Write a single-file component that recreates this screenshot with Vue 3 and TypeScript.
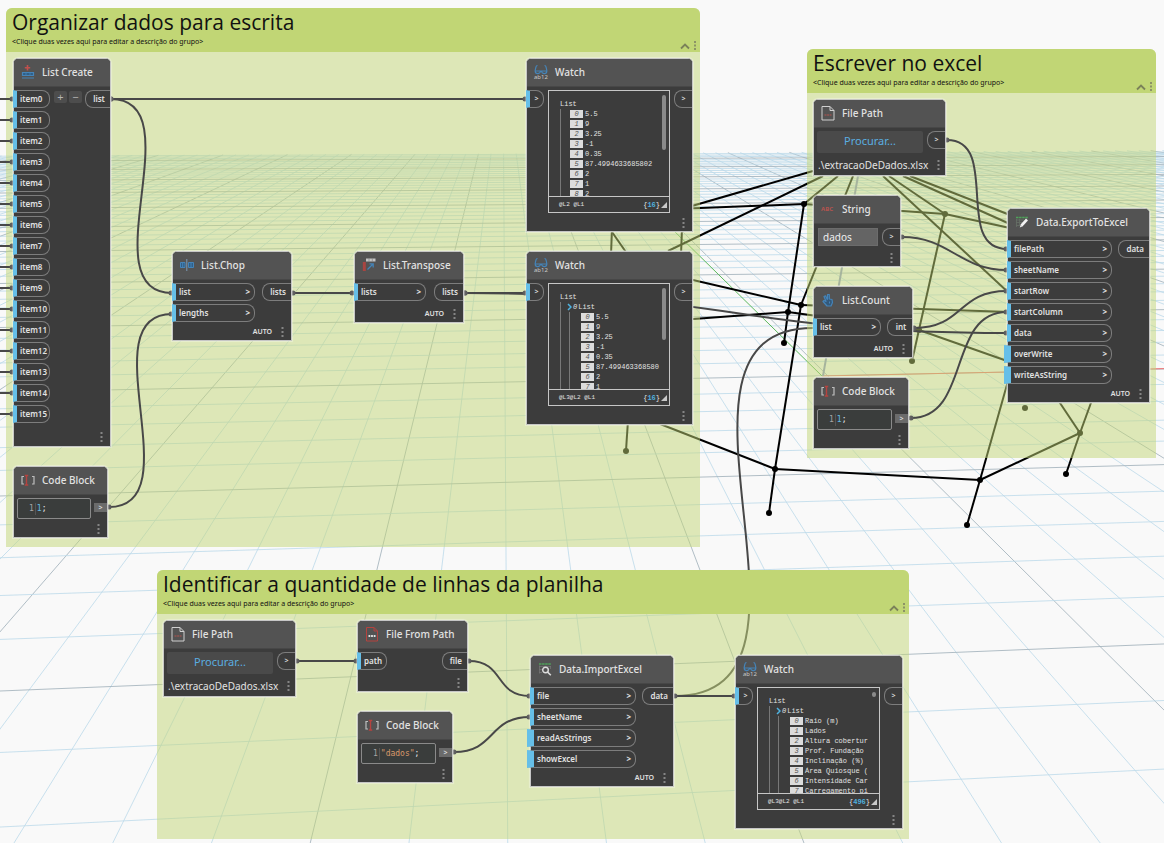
<script setup lang="ts">
interface Port { name: string; optional?: boolean }
interface Group { id: string; title: string; x: number; y: number; w: number; h: number }
interface WatchData { nested: boolean; rows: string[]; levels: string; count: number; thumb: number }
interface GraphNode {
  id: string
  title: string
  icon: string
  x: number
  y: number
  w: number
  kind: 'ports' | 'code' | 'watch' | 'file' | 'string'
  inputs?: Port[]
  inW?: number
  output?: string
  auto?: boolean
  resizable?: boolean
  code?: { text: string; type: string }
  value?: string
  watch?: WatchData
}

const groups: Group[] = [
  { id: 'g1', title: 'Organizar dados para escrita', x: 6, y: 8, w: 694, h: 539 },
  { id: 'g2', title: 'Escrever no excel', x: 807, y: 49, w: 349, h: 409 },
  { id: 'g3', title: 'Identificar a quantidade de linhas da planilha', x: 157, y: 570, w: 752, h: 269 },
]

const numbers = ['5.5', '9', '3.25', '-1', '0.35']
const p = (...names: string[]): Port[] => names.map((name) => ({ name }))

const nodes: GraphNode[] = [
  { id: 'create', title: 'List Create', icon: 'create', x: 13, y: 58, w: 98, kind: 'ports', inputs: Array.from({ length: 16 }, (_, i) => ({ name: `item${i}` })), inW: 37, output: 'list', resizable: true },
  { id: 'code1', title: 'Code Block', icon: 'code', x: 13, y: 466, w: 95, kind: 'code', code: { text: '1', type: 'num' } },
  { id: 'chop', title: 'List.Chop', icon: 'chop', x: 172, y: 251, w: 120, kind: 'ports', inputs: p('list', 'lengths'), inW: 83, output: 'lists', auto: true },
  { id: 'transpose', title: 'List.Transpose', icon: 'transpose', x: 354, y: 251, w: 110, kind: 'ports', inputs: p('lists'), inW: 72, output: 'lists', auto: true },
  { id: 'watch1', title: 'Watch', icon: 'watch', x: 526, y: 58, w: 167, kind: 'watch', watch: { nested: false, rows: [...numbers, '87.4994633685802', '2', '1', '2'], levels: '@L2 @L1', count: 16, thumb: 55 } },
  { id: 'watch2', title: 'Watch', icon: 'watch', x: 526, y: 251, w: 167, kind: 'watch', watch: { nested: true, rows: [...numbers, '87.499463368580', '2', '1'], levels: '@L3@L2 @L1', count: 16, thumb: 52 } },
  { id: 'file1', title: 'File Path', icon: 'file', x: 813, y: 99, w: 133, kind: 'file', value: '.\\extracaoDeDados.xlsx' },
  { id: 'string', title: 'String', icon: 'string', x: 813, y: 195, w: 88, kind: 'string', value: 'dados' },
  { id: 'count', title: 'List.Count', icon: 'count', x: 813, y: 286, w: 100, kind: 'ports', inputs: p('list'), inW: 68, output: 'int', auto: true },
  { id: 'code2', title: 'Code Block', icon: 'code', x: 813, y: 377, w: 96, kind: 'code', code: { text: '1', type: 'num' } },
  { id: 'export', title: 'Data.ExportToExcel', icon: 'export', x: 1007, y: 208, w: 143, kind: 'ports', inputs: [...p('filePath', 'sheetName', 'startRow', 'startColumn', 'data'), { name: 'overWrite', optional: true }, { name: 'writeAsString', optional: true }], inW: 105, output: 'data', auto: true },
  { id: 'file2', title: 'File Path', icon: 'file', x: 163, y: 620, w: 133, kind: 'file', value: '.\\extracaoDeDados.xlsx' },
  { id: 'from', title: 'File From Path', icon: 'from', x: 357, y: 620, w: 111, kind: 'ports', inputs: p('path'), inW: 30, output: 'file' },
  { id: 'code3', title: 'Code Block', icon: 'code', x: 357, y: 711, w: 96, kind: 'code', code: { text: '"dados"', type: 'str' } },
  { id: 'import', title: 'Data.ImportExcel', icon: 'import', x: 530, y: 655, w: 144, kind: 'ports', inputs: [...p('file', 'sheetName'), { name: 'readAsStrings', optional: true }, { name: 'showExcel', optional: true }], inW: 106, output: 'data', auto: true },
  { id: 'watch3', title: 'Watch', icon: 'watch', x: 735, y: 655, w: 168, kind: 'watch', watch: { nested: true, rows: ['Raio (m)', 'Lados', 'Altura cobertur', 'Prof. Fundação', 'Inclinação (%)', 'Área Quiosque (', 'Intensidade Car', 'Carregamento pi'], levels: '@L3@L2 @L1', count: 496, thumb: 5 } },
]

/* Perspective floor grid: one family meets at the vanishing point, the other recedes to the horizon. */
const vp = { x: 503, y: 53 }
const far = { x: 14500, y: 105 }
interface Line { x1: number; y1: number; x2: number; y2: number; major: boolean }
const gridLines: Line[] = []
for (let k = -42; k <= 58; k++) {
  const s = 0.125 * k + 0.006
  const top = 156 - (vp.x + s * 103) * 0.0045
  gridLines.push({ x1: vp.x + s * (top - vp.y), y1: top, x2: vp.x + s * 1100, y2: vp.y + 1100, major: (((k + 2) % 5) + 5) % 5 === 0 })
}
for (let m = -6; m <= 58; m++) {
  const y = 51 + 1 / (0.0015625 + 0.00013695 * m)
  gridLines.push({ x1: 0, y1: y, x2: 2400, y2: y - ((y - far.y) / far.x) * 2400, major: m % 5 === 0 })
}

const edges: number[][] = [
  [640, 221, 813, 171], [668, 251, 823, 176], [650, 210, 804, 204], [804, 204, 945, 214], [945, 214, 1010, 228],
  [804, 204, 838, 176], [804, 204, 788, 312], [788, 312, 784, 343], [853, 176, 801, 305], [801, 305, 775, 469],
  [775, 469, 769, 513], [680, 277, 801, 305], [801, 305, 1010, 312], [680, 320, 788, 312], [788, 312, 919, 330],
  [919, 330, 1010, 362], [945, 214, 912, 361], [883, 176, 1010, 294], [889, 176, 945, 214], [903, 176, 1010, 224],
  [910, 176, 1010, 215], [1010, 374, 980, 480], [980, 480, 967, 525], [775, 469, 980, 480], [980, 480, 1080, 433],
  [1080, 433, 1066, 474], [1080, 433, 1092, 400], [1058, 400, 1080, 433], [655, 422, 775, 469], [628, 420, 626, 451],
  [612, 228, 611, 255], [612, 232, 628, 255], [682, 228, 681, 255],
]
const vertices: number[][] = [
  [804, 204], [945, 214], [788, 312], [784, 343], [801, 305], [775, 469], [769, 513], [919, 330], [912, 361],
  [980, 480], [967, 525], [1080, 433], [1066, 474], [1025, 408], [626, 451],
]

const bend = (x1: number, y1: number, x2: number, y2: number, d: number): string =>
  `M${x1} ${y1}C${x1 + d} ${y1} ${x2 - d} ${y2} ${x2} ${y2}`

const backWire = bend(674, 696, 813, 328, 178)
const ends: number[][] = [
  [111, 99, 526, 99, 100], [111, 99, 172, 293, 84], [109, 507, 172, 314, 84], [293, 293, 353, 293, 20],
  [465, 293, 526, 293, 20], [465, 293, 1007, 333, 270], [947, 140, 1007, 249, 54], [902, 237, 1007, 270, 48],
  [914, 328, 1007, 291, 50], [911, 418, 1007, 312, 60], [297, 661, 357, 661, 20], [469, 661, 530, 696, 36],
  [454, 752, 530, 717, 42], [675, 696, 735, 696, 20],
  ...Array.from({ length: 16 }, (_, i) => [-20, 99 + i * 21, 13, 99 + i * 21, 8]),
]
const wires: string[] = ends.map(([a, b, c, d, e]) => bend(a, b, c, d, e))
</script>

<template>
  <main class="canvas">
    <svg class="layer" aria-hidden="true">
      <line v-for="(l, i) in gridLines" :key="'g' + i" :x1="l.x1" :y1="l.y1" :x2="l.x2" :y2="l.y2" :class="l.major ? 'major' : 'minor'" />
      <line class="axis-y" x1="668" y1="225" x2="822" y2="376" />
      <line class="axis-x" x1="822" y1="376" x2="2400" y2="342" />
      <line class="axis-z" x1="858" y1="176" x2="823" y2="376" />
      <line v-for="(e, i) in edges" :key="'e' + i" class="edge" :x1="e[0]" :y1="e[1]" :x2="e[2]" :y2="e[3]" />
      <circle v-for="(v, i) in vertices" :key="'v' + i" :cx="v[0]" :cy="v[1]" r="3" />
      <path class="wire" :d="backWire" />
    </svg>

    <section v-for="g in groups" :key="g.id" class="group" :style="{ left: g.x + 'px', top: g.y + 'px', width: g.w + 'px', height: g.h + 'px' }">
      <header class="group-head">
        <h2>{{ g.title }}</h2>
        <p>&lt;Clique duas vezes aqui para editar a descrição do grupo&gt;</p>
        <div class="group-tools">
          <button type="button" aria-label="Recolher grupo"><svg width="10" height="8" viewBox="0 0 10 8"><path d="M1 6.500 5 2.500 9 6.500" fill="none" stroke="#7b8259" stroke-width="1.800" /></svg></button>
          <button type="button" aria-label="Menu do grupo"><svg width="4" height="9" viewBox="0 0 4 9" fill="#8c9366"><path d="M1 0h2v2H1zM1 3.500h2v2H1zM1 7h2v2H1z" /></svg></button>
        </div>
      </header>
    </section>

    <svg class="layer" aria-hidden="true">
      <path v-for="(w, i) in wires" :key="i" class="wire" :d="w" />
      <g class="ends"><template v-for="(e, i) in ends" :key="i"><circle :cx="e[0]" :cy="e[1]" r="2.500" /><circle :cx="e[2] - 1" :cy="e[3]" r="2.500" /></template></g>
    </svg>

    <article v-for="n in nodes" :key="n.id" class="node" :class="n.kind" :style="{ left: n.x + 'px', top: n.y + 'px', width: n.w + 'px' }">
      <header class="head">
        <svg class="icon" width="14" height="14" viewBox="0 0 14 14" fill="none" aria-hidden="true">
          <g v-if="n.icon === 'create'"><path d="M6.500 0v5.500M3.800 2.700h5.400" stroke="#c0504d" stroke-width="1.600" /><path d="M1.500 7.500h11v3h-11zM1 13h12" stroke="#4584b8" stroke-width="1.200" fill="#2f5f88" /><path d="M5 7.500v3M9 7.500v3" stroke="#4584b8" stroke-width=".8" /></g>
          <g v-else-if="n.icon === 'code'"><path d="M3 3.500H1v7.500h2M11 3.500h2v7.500h-2" stroke="#bdbdbd" stroke-width="1.200" /><path d="M3.800 2.500h3.400M3.800 12h3.400M5.500 2.500v9.500" stroke="#b5433f" stroke-width="1.400" /></g>
          <g v-else-if="n.icon === 'chop'"><path d="M.5 4.500h4.500v5H.5zM8.500 4.500h5v5h-5zM2.700 4.500v5M11 4.500v5" stroke="#4584b8" fill="#2f5f88" /><path d="M6.800 1v12" stroke="#7d9bb5" /></g>
          <g v-else-if="n.icon === 'transpose'"><path d="M4 .5h9.500v3H4z" fill="#c4c4c4" /><path d="M7 .5v3M10.300.5v3" stroke="#777" stroke-width=".6" /><path d="M.8 4h3v9h-3z" fill="#a94541" /><path d="M5.500 11.500l5-5M7.500 5.800h3.700v3.700" stroke="#4584b8" stroke-width="1.300" /></g>
          <g v-else-if="n.icon === 'watch'"><path d="M3.500.5C1.300.5 2 3.500 1 6M10.500.5c2.200 0 1.500 3 2.500 5.500M1 6h12M1.200 6c0 3.500 4.800 3.500 5.400 0M12.800 6c0 3.500-4.800 3.500-5.400 0" stroke="#4584b8" stroke-width="1.200" /><text x="0" y="14" class="tiny">ab12</text></g>
          <g v-else-if="n.icon === 'file'"><path d="M1 .5h8l4 4v9.500H1zM9 .5v4h4" stroke="#d0d0d0" /><path d="M3.500 9h7" stroke="#b5544f" stroke-width="1.200" stroke-dasharray="2 .6" /></g>
          <g v-else-if="n.icon === 'from'"><path d="M1.500.5h7.500l3.500 3.500v10h-11zM9 .5v3.500h3.500" stroke="#b5433f" /><path d="M3.500 9h7" stroke="#e0e0e0" stroke-width="2" stroke-dasharray="1.800 .8" /></g>
          <g v-else-if="n.icon === 'string'"><text x="0" y="9" class="abc">ABC</text></g>
          <g v-else-if="n.icon === 'count'"><path d="M6.500 6V1.500h1.800V6l2.700.5.500 3-1.500 3.500H6L2 8.500 3 7.500l2 1L3 3.500l1.500-.7L6.500 7" stroke="#4584b8" stroke-width="1.200" fill="#34597a" stroke-linejoin="round" /><path d="M8.500 8.500v2" stroke="#4584b8" /></g>
          <g v-else-if="n.icon === 'import'"><path d="M1 2h12" stroke="#4fa35a" stroke-width="1.600" stroke-dasharray="2.500 .6" /><path d="M1 4.500h12M1 7.500h4M1 10.500h3M1.500 3.500v8M12.500 4v3" stroke="#737373" stroke-width=".8" /><circle cx="7.500" cy="8" r="2.800" stroke="#dedede" stroke-width="1.400" /><path d="m9.500 10 3.300 3.300" stroke="#dedede" stroke-width="1.600" /></g>
          <g v-else-if="n.icon === 'export'"><path d="M1 2.500h12" stroke="#4fa35a" stroke-width="1.600" stroke-dasharray="2.500 .6" /><path d="M1 5h8M1 7.500h6M1 10.500h4M1.500 4v8M4.500 4v6" stroke="#667066" stroke-width=".8" /><path d="m6.500 10.500 5.500-6" stroke="#f2f2f2" stroke-width="2.600" /><path d="m4.800 12.500 1-3 1.800 1.800z" fill="#f2f2f2" /></g>
        </svg>
        <h3>{{ n.title }}</h3>
      </header>

      <div v-if="n.kind === 'ports'" class="body">
        <ul class="inputs" :style="{ width: n.inW + 'px' }">
          <li v-for="i in n.inputs" :key="i.name" class="port in" :class="{ optional: i.optional }"><span>{{ i.name }}</span><i v-if="n.auto">&gt;</i></li>
        </ul>
        <div v-if="n.resizable" class="resize"><button type="button" aria-label="Adicionar item">+</button><button type="button" aria-label="Remover item">−</button></div>
        <div class="port out">{{ n.output }}</div>
      </div>

      <div v-else-if="n.kind === 'code'" class="body">
        <div class="editor"><span class="gutter">1</span><code contenteditable="true" role="textbox" aria-label="Código"><span :class="n.code?.type">{{ n.code?.text }}</span>;</code></div>
        <div class="code-out">&gt;</div>
      </div>

      <div v-else-if="n.kind === 'file'" class="body">
        <button type="button" class="browse">Procurar...</button>
        <div class="port out mark">&gt;</div>
      </div>

      <div v-else-if="n.kind === 'string'" class="body">
        <input class="text" type="text" aria-label="Texto" :value="n.value" />
        <div class="port out mark">&gt;</div>
      </div>

      <div v-else-if="n.watch" class="body">
        <div class="port in mark"><span>&gt;</span></div>
        <div class="screen">
          <div class="tree" :class="{ nested: n.watch.nested }">
            <div class="root">List</div>
            <div class="level">
              <div v-if="n.watch.nested" class="sub"><svg width="5" height="8" viewBox="0 0 5 8"><path d="M1 1l3 3-3 3" fill="none" stroke="#4fb3e0" stroke-width="1.500" /></svg><em>0</em>List</div>
              <ol class="rows">
                <li v-for="(r, i) in n.watch.rows" :key="i"><em>{{ i }}</em>{{ r }}</li>
              </ol>
            </div>
            <div class="thumb" :style="{ height: n.watch.thumb + 'px' }"></div>
          </div>
          <div class="status"><span>{{ n.watch.levels }}</span><span class="total">{<b>{{ n.watch.count }}</b>}</span><svg width="6" height="6" viewBox="0 0 6 6"><path d="M6 0v6H0z" fill="#c8c8c8" /></svg></div>
        </div>
        <div class="port out mark">&gt;</div>
      </div>

      <footer class="foot" :class="{ roomy: n.resizable }">
        <span v-if="n.kind === 'file'" class="path">{{ n.value }}</span>
        <span v-if="n.auto" class="auto">AUTO</span>
        <button type="button" aria-label="Opções do nó"><svg width="3" height="10" viewBox="0 0 3 10" fill="#858585"><path d="M.5 0h2v2h-2zM.5 4h2v2h-2zM.5 8h2v2h-2z" /></svg></button>
      </footer>
    </article>
  </main>
</template>

<style>
body { margin: 0; background: #f9f9f9; }
</style>

<style scoped>
.canvas { position: relative; width: 100%; height: 100vh; min-height: 840px; overflow: hidden; background: #f9f9f9; font-family: "Noto Sans", "Open Sans", sans-serif; color: #e2e2e2; }
.canvas * { box-sizing: border-box; }
h2, h3, p, ul, ol { margin: 0; padding: 0; font-weight: 400; list-style: none; }
button { border: 0; padding: 0; margin: 0; background: none; font: inherit; color: inherit; display: flex; align-items: center; justify-content: center; }
.layer { position: absolute; inset: 0; width: 100%; height: 100%; }
.minor { stroke: #bcd9ea; stroke-opacity: .8; }
.major { stroke: #a3b3bc; stroke-opacity: .85; }
.axis-y { stroke: #5cb85c; }
.axis-x { stroke: #f07070; }
.axis-z { stroke: #8b93c4; stroke-width: 2; }
.edge { stroke: #000; stroke-width: 2; }
.wire { fill: none; stroke: #484848; stroke-width: 2; }
.ends { fill: #5c5c5c; }

.group { position: absolute; border-radius: 6px 6px 0 0; background: rgba(193, 214, 117, .5); overflow: hidden; color: #111; }
.group-head { position: relative; height: 44px; padding: 0 6px; background: #c1d675; }
.group-head h2 { font-family: "Open Sans", "Noto Sans", sans-serif; font-size: 21px; line-height: 29px; white-space: nowrap; }
.group-head p { font-size: 7px; line-height: 9px; }
.group-tools { position: absolute; right: 3px; bottom: 2px; display: flex; align-items: center; gap: 3px; }

.node { position: absolute; border: 1px solid #c6c6c6; border-radius: 5px 5px 0 0; background: #3c3c3c; box-shadow: 0 0 1px 1px rgba(255, 255, 255, .35); }
.head { display: flex; align-items: center; gap: 7px; height: 28px; padding: 0 7px 1px; background: #535353; border-radius: 4px 4px 0 0; border-bottom: 1px solid #474747; }
.head h3 { font-size: 10px; line-height: 14px; font-weight: 500; white-space: nowrap; }
.icon { flex: none; overflow: visible; }
.tiny { font-size: 6px; fill: #c8c8c8; }
.abc { font-size: 6px; fill: #b5544f; font-weight: 700; }
.body { display: flex; align-items: flex-start; justify-content: space-between; padding-top: 3px; min-height: 24px; }
.inputs { display: flex; flex-direction: column; gap: 3px; margin-left: -1px; }
.port { height: 18px; display: flex; align-items: center; border: 1px solid #7d7d7d; font-size: 8px; line-height: 10px; font-weight: 600; }
.in { position: relative; justify-content: space-between; border-left: 4px solid #66bfe8; border-radius: 0 8px 8px 0; padding: 0 4px 0 3px; }
.in i { font-style: normal; font-weight: 700; }
.optional { margin-left: -3px; border-left-width: 7px; }
.out { min-width: 25px; justify-content: center; border-right: 0; border-radius: 8px 0 0 8px; padding: 0 5px 0 7px; }
.mark { min-width: 18px; width: 18px; padding: 0; font-size: 7px; justify-content: center; }
.resize { display: flex; gap: 2px; margin: 1px auto 0 4px; }
.resize button { width: 13px; height: 12px; background: #4d4d4d; border-radius: 2px; font-size: 11px; line-height: 12px; color: #b5b5b5; }
.foot { display: flex; align-items: center; justify-content: flex-end; gap: 9px; height: 18px; padding: 1px 7px 0 0; }
.foot.roomy { height: 23px; padding-top: 4px; }
.auto { font-size: 7px; font-weight: 600; }

.code .body { min-height: 24px; padding: 3px 0 0 3px; }
.editor { flex: 1; display: flex; align-items: center; height: 21px; margin-right: 3px; border: 1px solid #8a8a8a; border-radius: 2px; background: #3a3d3c; padding-left: 11px; font-family: "DejaVu Sans Mono", "Liberation Mono", monospace; font-size: 8px; line-height: 12px; }
.gutter { padding-right: 1px; margin-right: 1px; border-right: 1px solid #555; color: #a5a5a5; }
.num { color: #62bce4; }
.str { color: #d8986a; }
.editor code { font-family: inherit; outline: 0; color: #ececec; }
.code-out { width: 13px; height: 9px; margin-top: 5px; background: #6b6b6b; font-size: 7px; line-height: 9px; text-align: center; font-weight: 600; }

.file .body { padding: 3px 0 0 3px; }
.browse { flex: 1; height: 22px; margin-right: 4px; background: #4a4a4a; border-radius: 2px; color: #5aaee0; font-size: 11px; line-height: 18px; padding-bottom: 2px; }
.file .foot { height: 22px; justify-content: space-between; padding-left: 4px; }
.path { font-size: 10px; white-space: nowrap; }

.string .body { padding: 4px 0 0 4px; }
.text { flex: 1; min-width: 0; height: 18px; margin-right: 4px; border: 1px solid #6c6c6c; background: #646464; color: #eee; font: 10px "Noto Sans", sans-serif; padding: 0 4px; }

.watch .body { gap: 4px; }
.watch .in { margin-left: -1px; }
.screen { flex: 1; min-width: 0; height: 123px; border: 1px solid #c6c6c6; display: flex; flex-direction: column; font-family: "Liberation Mono", monospace; font-size: 7px; line-height: 10px; }
.tree { position: relative; height: 105px; padding: 8px 0 0 11px; overflow: hidden; white-space: nowrap; }
.level { border-left: 1px solid #777; padding-left: 9px; height: 88px; }
.nested .level { padding-left: 8px; }
.sub { display: flex; align-items: center; gap: 1px; margin-left: -2px; height: 10px; }
.nested .rows { border-left: 1px solid #777; padding-left: 11px; height: 78px; }
.rows li { display: flex; align-items: center; gap: 2px; height: 10px; }
.rows em { width: 13px; height: 8px; line-height: 8px; text-align: center; background: #dcdcdc; color: #555; }
.thumb { position: absolute; right: 3px; top: 4px; width: 4px; border-radius: 2px; background: #8a8a8a; }
.status { flex: 1; display: flex; align-items: center; border-top: 1px solid #c6c6c6; padding: 0 2px 0 10px; font-size: 6px; }
.total { margin-left: auto; margin-right: 1px; font-size: 7px; }
.total b { color: #4fb3e0; }
</style>
